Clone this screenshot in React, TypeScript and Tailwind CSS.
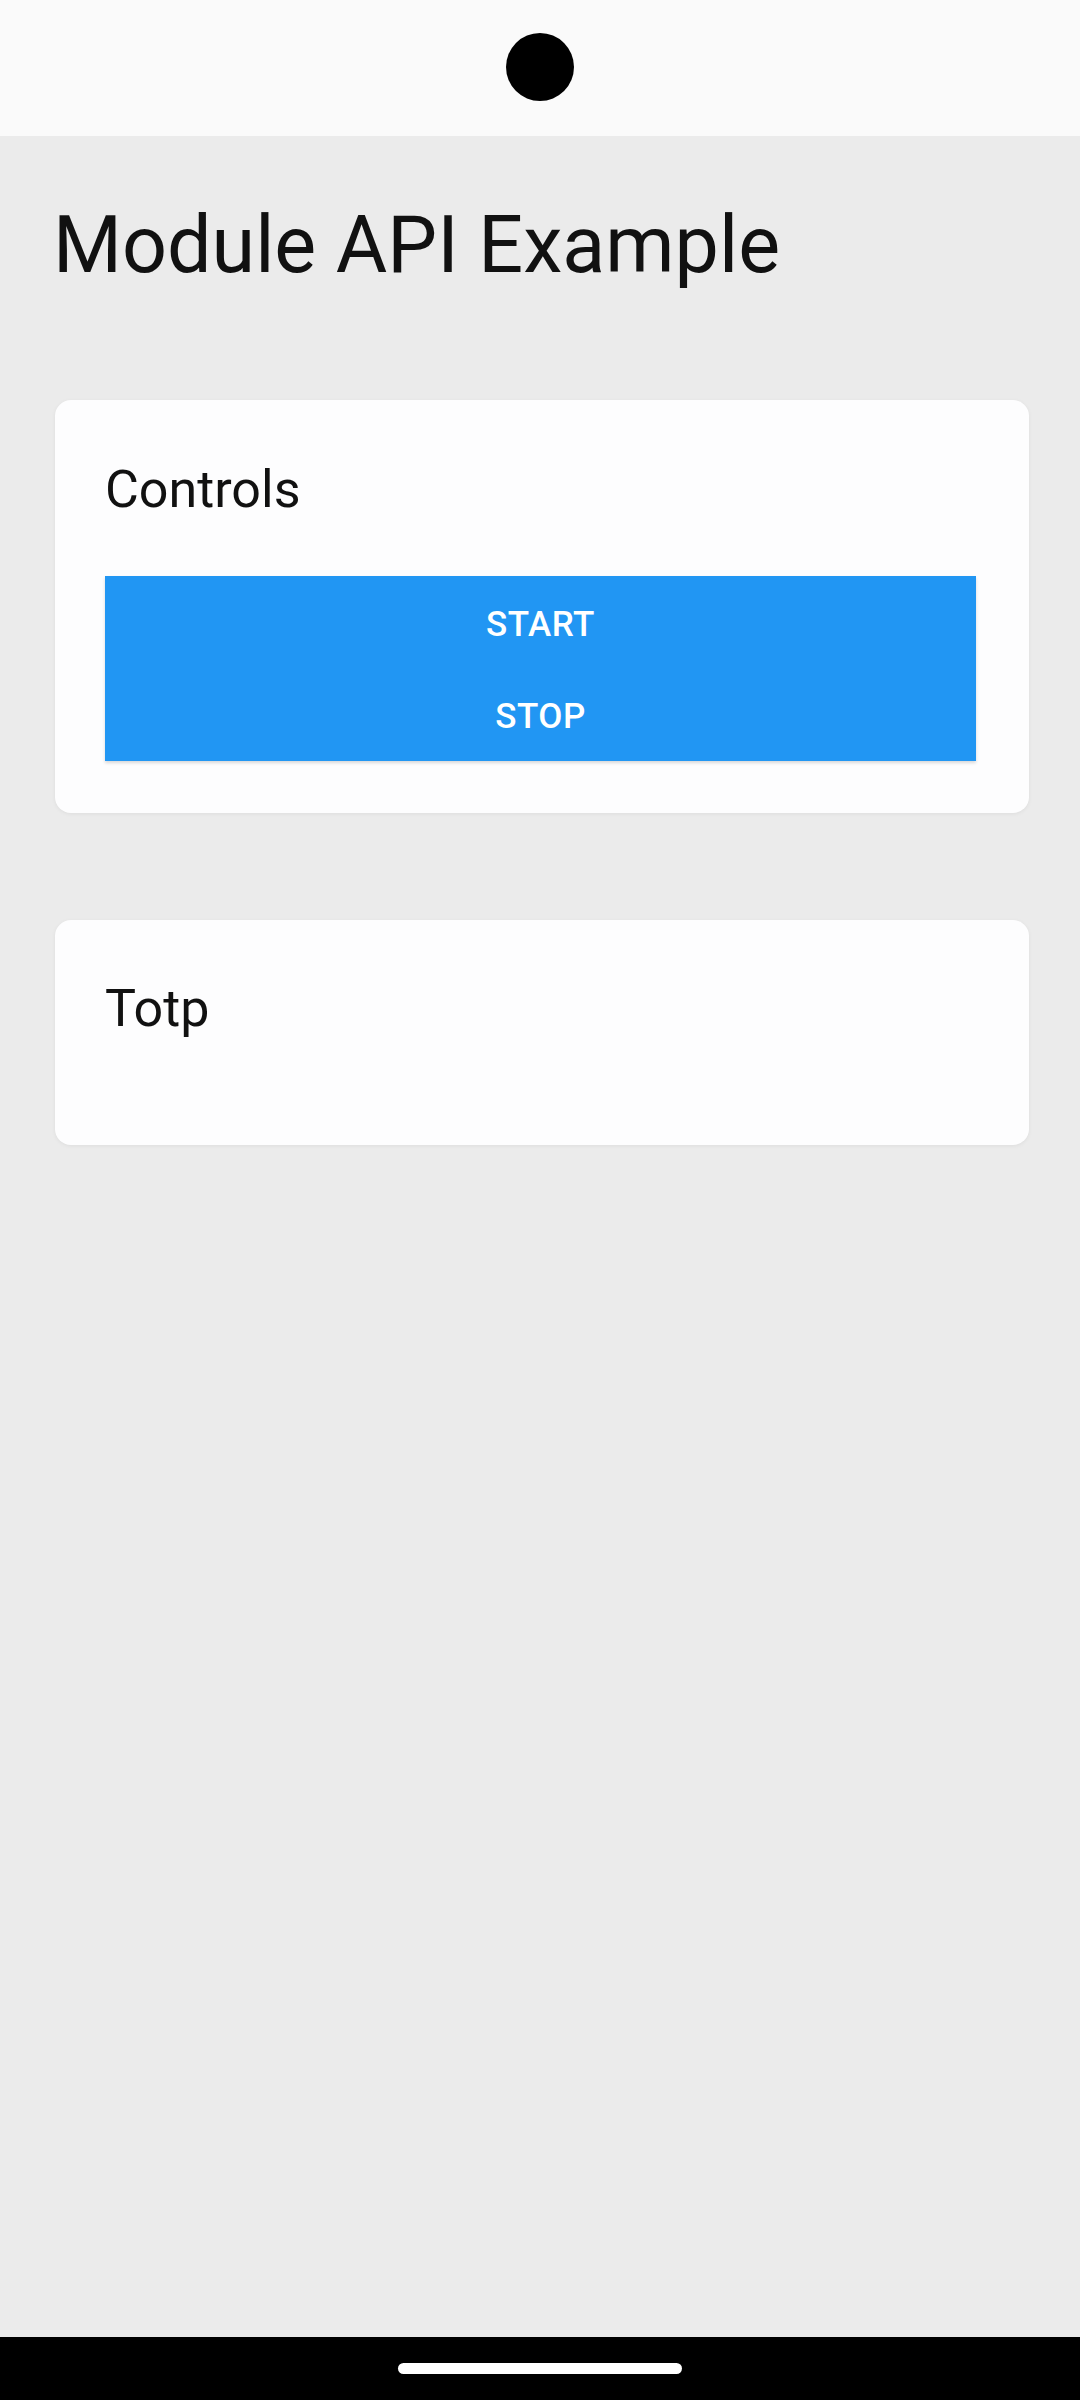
import React from "react";

const Card = ({ title, children, className }: { title: string; children?: React.ReactNode; className?: string }) => (
  <section
    className={`ml-[55px] mr-[51px] rounded-[16px] bg-[#fdfdfe] pl-[50px] pr-[53px] shadow-[0_1px_4px_rgba(0,0,0,0.06)] ${className ?? ""}`}
  >
    <h2 className="text-[52px] leading-[63px] text-[#111]">{title}</h2>
    {children}
  </section>
);

export default function App() {
  return (
    <div
      className="flex h-[2400px] w-[1080px] flex-col bg-[#ebebeb]"
      style={{ fontFamily: "Roboto, 'Noto Sans', sans-serif" }}
    >
      {/* status bar with camera cutout */}
      <div className="flex h-[136px] shrink-0 items-start justify-center bg-[#fafafa] pt-[33px]">
        <div className="h-[68px] w-[68px] rounded-full bg-black" />
      </div>

      <main className="flex-1">
        <h1 className="ml-[53px] mt-[63px] text-[79px] leading-[92px] text-[#111]">Module API Example</h1>

        <Card title="Controls" className="mt-[109px] pb-[52px] pt-[58px]">
          <div className="mt-[55px] bg-[#2196f3] shadow-[0_2px_3px_rgba(0,0,0,0.15)]">
            <button className="flex h-[92px] w-full items-center justify-center pt-[6px] text-[35px] font-medium tracking-[0.5px] text-white">
              START
            </button>
            <button className="flex h-[93px] w-full items-center justify-center pt-[6px] text-[35px] font-medium tracking-[0.5px] text-white">
              STOP
            </button>
          </div>
        </Card>

        <Card title="Totp" className="mt-[107px] pb-[105px] pt-[57px]" />
      </main>

      {/* navigation bar */}
      <div className="flex h-[63px] shrink-0 items-start justify-center bg-black pt-[26px]">
        <div className="h-[11px] w-[284px] rounded-full bg-white" />
      </div>
    </div>
  );
}
